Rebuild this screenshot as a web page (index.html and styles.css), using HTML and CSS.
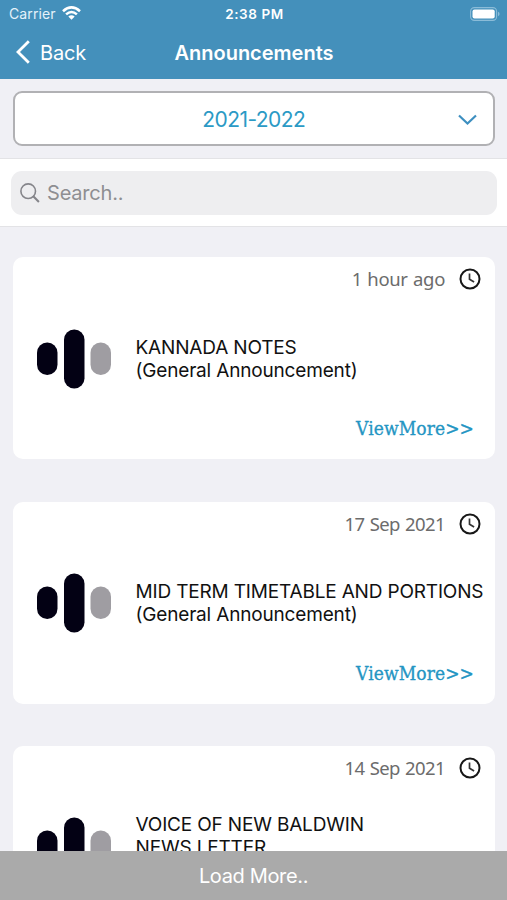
FILE: index.html
```html
<!DOCTYPE html>
<html lang="en">
<head>
<meta charset="utf-8">
<title>Announcements</title>
<link rel="stylesheet" href="styles.css">
</head>
<body>
<svg class="defs" aria-hidden="true">
  <symbol id="clock" viewBox="0 0 22 22"><circle cx="11" cy="11" r="9.5" fill="none" stroke="#171717" stroke-width="2"/><path d="M10.5 5.4v5.9l4.6 2.8" fill="none" stroke="#333" stroke-width="1.7"/></symbol>
  <symbol id="bars" viewBox="0 0 74 60"><rect x="0" y="13.5" width="20.5" height="32.5" rx="10.2" fill="#030114"/><rect x="27" y="0.5" width="20.5" height="59" rx="10.2" fill="#030114"/><rect x="53.5" y="13.5" width="20.5" height="32.5" rx="10.2" fill="#9f9da2"/></symbol>
</svg>
<div class="phone">
  <header class="top">
    <div class="status">
      <div class="carrier"><span>Carrier</span>
        <svg class="wifi" width="19" height="14" viewBox="0 0 19 14" fill="none" stroke="#fff" stroke-width="2.6"><path d="M1 5.2Q9.5-2.4 18 5.2M4.1 8.4Q9.5 3.6 14.9 8.4"/><path d="M6.3 10.6Q9.5 7.9 12.7 10.6L9.5 13.8Z" fill="#fff" stroke="none"/></svg>
      </div>
      <span class="time">2:38 PM</span>
      <svg class="battery" width="30" height="14" viewBox="0 0 30 14"><rect x=".6" y=".6" width="26" height="12.8" rx="3.8" fill="none" stroke="#8bbcd8" stroke-width="1.1"/><rect x="2.5" y="2.5" width="22.2" height="9" rx="2" fill="#fff"/><path d="M28 4.8q1.6.6 1.6 2.2T28 9.2Z" fill="#8bbcd8"/></svg>
    </div>
    <nav class="nav">
      <a class="back"><svg width="16" height="24" viewBox="0 0 16 24" fill="none" stroke="#fff" stroke-width="2.8"><path d="M13.8 1.3 3 12l10.8 10.7"/></svg><span>Back</span></a>
      <h1>Announcements</h1>
    </nav>
  </header>
  <section class="picker">
    <div class="select"><span>2021-2022</span><svg width="19" height="12" viewBox="0 0 19 12" fill="none" stroke="#3d8fc0" stroke-width="2.2"><path d="M1 1.5l8.5 8 8.5-8"/></svg></div>
  </section>
  <section class="searchbar">
    <div class="search"><svg width="20" height="20" viewBox="0 0 20 20" fill="none" stroke="#85858a"><circle cx="8.2" cy="8.2" r="7.3" stroke-width="1.6"/><path d="M13.3 13.3l5.6 5.6" stroke-width="2.1"/></svg><span>Search..</span></div>
  </section>
  <main class="list">
    <article class="card">
      <div class="meta"><span class="ago">1 hour ago</span><svg><use href="#clock"/></svg></div>
      <div class="body"><svg><use href="#bars"/></svg><p><span>KANNADA NOTES</span><br><span>(General Announcement)</span></p></div>
      <a class="more">ViewMore&gt;&gt;</a>
    </article>
    <article class="card">
      <div class="meta"><span>17 Sep 2021</span><svg><use href="#clock"/></svg></div>
      <div class="body"><svg><use href="#bars"/></svg><p><span>MID TERM TIMETABLE AND PORTIONS</span><br><span>(General Announcement)</span></p></div>
      <a class="more">ViewMore&gt;&gt;</a>
    </article>
    <article class="card">
      <div class="meta"><span>14 Sep 2021</span><svg><use href="#clock"/></svg></div>
      <div class="body tall"><svg><use href="#bars"/></svg><p><span>VOICE OF NEW BALDWIN</span><br><span>NEWS LETTER</span></p></div>
    </article>
  </main>
  <footer class="load"><span>Load More..</span></footer>
</div>
</body>
</html>
```
FILE: styles.css
```css
* { box-sizing: border-box; }
body { margin: 0; background: #f0f0f5; font-family: Inter, "Liberation Sans", sans-serif; }
.defs { position: absolute; width: 0; height: 0; }
.phone { width: 507px; height: 900px; display: flex; flex-direction: column; overflow: hidden; }
.top { flex: none; height: 79px; background: #4490bb; color: #fff; }
.status { height: 27px; display: grid; grid-template-columns: 1fr auto 1fr; align-items: center; padding: 0 7px 0 9px; }
.carrier { display: flex; align-items: center; gap: 6px; font-size: 14px; letter-spacing: .1px; color: #e5f2fa; }
.wifi { margin-top: -2px; }
.time { font-size: 13.5px; font-weight: 600; letter-spacing: .6px; }
.battery { justify-self: end; }
.nav { height: 51px; display: grid; grid-template-columns: 1fr auto 1fr; align-items: center; padding: 0 15px; }
.back { display: flex; align-items: center; gap: 9px; font-size: 20px; letter-spacing: -.15px; }
.back svg { margin-top: -1px; }
h1 { margin: 0 0 0 1px; font-size: 20px; font-weight: 600; line-height: 24px; }
.picker { flex: none; height: 80px; padding: 12.3px 12.5px 12.2px 13px; border-bottom: 1px solid #e3e3e6; }
.select { height: 55px; border: 2px solid #b1b1b4; border-radius: 9px; background: #fff; display: flex; align-items: center; justify-content: center; color: #2b9ac5; font-size: 21px; letter-spacing: -.55px; position: relative; }
.select span { padding-top: 2px; }
.select svg { position: absolute; right: 16px; top: 20.5px; }
.searchbar { flex: none; height: 68px; background: #fff; border-bottom: 1px solid #e3e3e6; padding: 12px 10px 12px 11px; }
.search { height: 43.5px; border-radius: 11px; background: #eeeef0; display: flex; align-items: center; gap: 7px; padding-left: 9px; color: #8e8e92; font-size: 20px; letter-spacing: -.2px; }
.search span { padding-top: 1px; }
.list { flex: 1; min-height: 0; overflow: hidden; padding: 30.4px 12px 0 12.5px; display: flex; flex-direction: column; gap: 42.3px; }
.card { flex: none; height: 202px; border-radius: 10px; background: #fff; display: flex; flex-direction: column; }
.meta { height: 44px; display: flex; align-items: center; justify-content: flex-end; gap: 14px; padding-right: 14px; font: 18.5px/24px "Noto Sans", sans-serif; letter-spacing: -.6px; word-spacing: 1px; color: #6c6c6c; }
.meta .ago { letter-spacing: -.35px; }
.meta svg { width: 22px; height: 22px; }
.body { height: 115px; display: flex; align-items: center; gap: 24.5px; padding-left: 24.5px; }
.body svg { width: 74px; height: 60px; flex: none; }
.body p { margin: 0; font-size: 19px; line-height: 23.3px; letter-spacing: -.17px; white-space: nowrap; color: #111; }
.body.tall p { padding-bottom: 23.3px; }
.more { align-self: flex-end; margin: -1px 21px 0 0; font: 19px/26px "DejaVu Serif Condensed", "DejaVu Serif", serif; letter-spacing: .1px; color: #2495c3; -webkit-text-stroke: .3px #2495c3; }
.load { flex: none; height: 48.6px; background: #aaa; color: #fff; font-size: 20px; letter-spacing: -.35px; padding-top: 1px; display: flex; align-items: center; justify-content: center; }
```
